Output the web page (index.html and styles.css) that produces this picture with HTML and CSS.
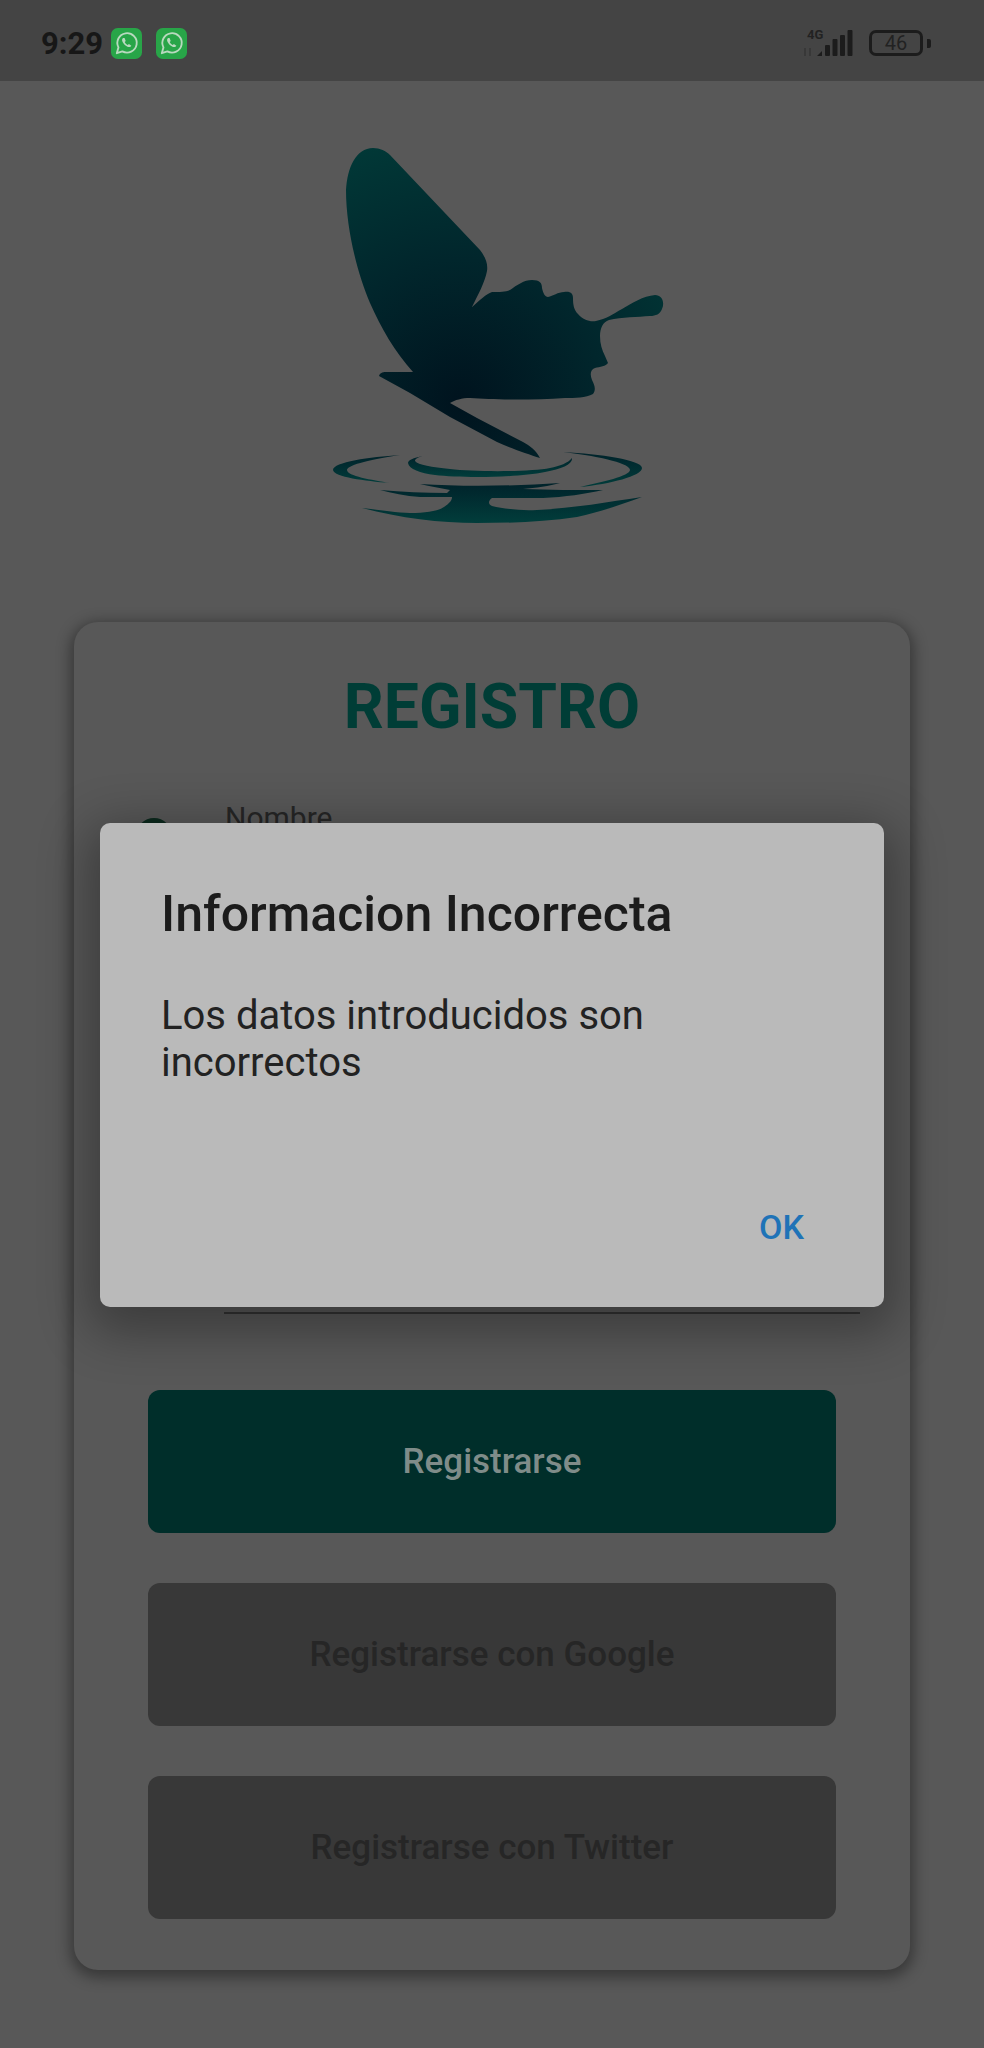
FILE: index.html
```html
<!DOCTYPE html>
<html lang="es">
<head>
<meta charset="utf-8">
<title>Registro</title>
<link rel="stylesheet" href="styles.css">
</head>
<body>
<div class="screen">
  <header class="status">
    <div class="status-left">
      <span class="time">9:29</span>
      <svg class="wa" viewBox="0 0 32 32"><rect width="32" height="32" rx="7" fill="#28a548"/><path d="M6 26l1.700-6a10 10 0 1 1 4 4.100z" fill="none" stroke="#b9d9bf" stroke-width="1.900" stroke-linejoin="round"/><path d="M12.500 10.300c-1.200.8-1.400 2.400-.5 4.200 1.100 2.300 3.100 4.200 5.500 5 1.600.5 3 0 3.500-1.300l-2.500-1.700-1.200 1.100c-1.300-.5-2.600-1.800-3.100-3.100l1-1.200-1.200-3z" fill="#b9d9bf"/></svg>
      <svg class="wa wa-second" viewBox="0 0 32 32"><rect width="32" height="32" rx="7" fill="#28a548"/><path d="M6 26l1.700-6a10 10 0 1 1 4 4.100z" fill="none" stroke="#b9d9bf" stroke-width="1.900" stroke-linejoin="round"/><path d="M12.500 10.300c-1.200.8-1.400 2.400-.5 4.200 1.100 2.300 3.100 4.200 5.500 5 1.600.5 3 0 3.500-1.300l-2.500-1.700-1.200 1.100c-1.300-.5-2.600-1.800-3.100-3.100l1-1.200-1.200-3z" fill="#b9d9bf"/></svg>
    </div>
    <div class="status-right">
      <div class="signal">
        <span class="net">4G</span>
        <svg class="bars" viewBox="0 0 50 27"><g fill="#1c1c1c"><path d="M14 26l5-5v5z"/><rect x="22" y="15" width="5" height="11" rx="1"/><rect x="29.500" y="9" width="5" height="17" rx="1"/><rect x="37" y="5" width="5" height="21" rx="1"/><rect x="44.500" y="0" width="5" height="26" rx="1"/></g><g fill="#383838"><rect x="1" y="18" width="2" height="8"/><rect x="6" y="18" width="2" height="8"/></g></svg>
      </div>
      <div class="battery"><span class="level">46</span></div>
      <span class="cap"></span>
    </div>
  </header>

  <div class="logo-wrap">
    <svg class="logo" viewBox="0 0 370 410">
      <defs>
        <radialGradient id="wing" gradientUnits="userSpaceOnUse" cx="150" cy="272" r="285">
          <stop offset="0" stop-color="#00131e"/>
          <stop offset="0.5" stop-color="#01262c"/>
          <stop offset="1" stop-color="#013a38"/>
        </radialGradient>
        <linearGradient id="water" x1="0" y1="0" x2="0" y2="1">
          <stop offset="0" stop-color="#00222a"/>
          <stop offset="1" stop-color="#013d3b"/>
        </linearGradient>
      </defs>
      <path fill="url(#wing)" d="M36 60C37 38 46 18 63 18C70 18 76 21 80 25L170 120C176 128 178 134 177 141C175 152 168 165 162 177C170 170 176 164 182 162C190 162 195 162 200 160C207 155 214 150 222 150C230 150 232 153 232 158C233 163 235 167 238 167C243 166 248 162 254 162C261 161 263 164 263 168C263 175 264 180 268 184C273 190 280 192 286 191C296 189 303 184 312 179C322 173 333 166 345 165C352 165 355 172 352 179C350 184 346 186 340 186C328 187 312 187 299 190C293 192 290 198 290 206C290 214 292 220 295 226L298 233C296 236 290 237 285 238C280 240 280 245 282 250C285 256 286 260 283 264C276 268 265 268 255 268C225 270 185 270 160 268C152 268 145 270 140 273L167 288L213 312C220 316 226 320 230 328C218 324 200 318 187 312L140 287L100 263L69 246C70 243 72 242 76 242L103 242C85 222 71 198 60 173C48 145 36 100 36 60Z"/>
      <g fill="url(#water)">
        <path d="M90 325C60 327 23 332 23 340C24 347 55 351 80 353C62 350 37 346 37 340C37 336 55 330 90 325Z"/>
        <path d="M253 322C290 324 332 330 332 338C332 346 300 354 270 357C292 352 320 346 320 340C320 334 295 327 253 322Z"/>
        <path d="M113 326C103 328 98 330 98 333C99 339 110 343 125 345C150 348 205 348 235 342C252 339 263 334 262 328C258 333 250 336 240 338C220 342 165 342 140 339C122 337 108 335 105 331C105 329 108 327 113 326Z"/>
        <path d="M110 354C155 357 205 356 250 353C240 356 225 358 213 359C240 360 265 360 293 360C275 364 255 367 233 368H182C178 371 178 374 182 376C195 379 212 381 227 380C265 378 298 372 332 367C310 375 290 382 267 387C235 392 200 393 167 393C130 393 90 388 52 378C72 380 88 383 100 383C116 383 128 381 134 377C140 373 142 370 142 367C130 367 120 367 110 367C95 366 82 363 70 360C92 362 115 363 137 363L140 360C130 358 118 356 110 354Z"/>
      </g>
    </svg>
  </div>

  <section class="card">
    <h1 class="title">REGISTRO</h1>
    <div class="field">
      <span class="field-icon"></span>
      <span class="field-label">Nombre</span>
    </div>
    <div class="last-line"></div>
    <div class="actions">
      <button class="btn btn-primary">Registrarse</button>
      <button class="btn btn-plain">Registrarse con Google</button>
      <button class="btn btn-plain">Registrarse con Twitter</button>
    </div>
  </section>

  <div class="dialog">
    <h2 class="dialog-title">Informacion Incorrecta</h2>
    <p class="dialog-body">Los datos introducidos son incorrectos</p>
    <div class="dialog-actions"><span class="ok">OK</span></div>
  </div>
</div>
</body>
</html>
```
FILE: styles.css
```css
* { box-sizing: border-box; }
html, body { margin: 0; padding: 0; }
body { background: #585858; font-family: Roboto, "Noto Sans", sans-serif; }
.screen { position: relative; width: 984px; height: 2048px; overflow: hidden; background: #585858; }

.status { height: 81px; background: #444444; display: flex; justify-content: space-between; align-items: center; padding: 5px 53px 0 41px; }
.status-left { display: flex; align-items: center; }
.time { font-size: 31px; font-weight: 700; color: #171717; width: 70px; }
.wa { width: 31px; height: 31px; display: block; }
.wa-second { margin-left: 14px; }
.status-right { display: flex; align-items: center; }
.signal { position: relative; width: 50px; height: 27px; margin-right: 16px; }
.net { position: absolute; left: 4px; top: -1px; font-size: 13px; font-weight: 700; color: #222; line-height: 12px; }
.bars { display: block; width: 50px; height: 27px; }
.battery { width: 54px; height: 26px; border: 3px solid #1c1c1c; border-radius: 7px; display: flex; align-items: center; justify-content: center; }
.level { font-size: 20px; color: #222; line-height: 1; }
.cap { width: 4px; height: 9px; margin-left: 4px; background: #1c1c1c; border-radius: 0 2px 2px 0; }

.logo-wrap { display: flex; justify-content: center; padding: 0 0 0 6px; height: 541px; }
.logo { display: block; width: 370px; height: 410px; margin-top: 49px; }

.card { width: 836px; height: 1348px; margin-left: 74px; background: #585858; border-radius: 24px; box-shadow: 0 4px 14px 4px rgba(0,0,0,.36); padding: 0 74px 51px; display: flex; flex-direction: column; }
.title { margin: 48px 0 0; font-size: 62.500px; font-weight: 700; line-height: 74px; color: #003d36; text-align: center; }
.field { display: flex; align-items: flex-start; height: 60px; margin: 56px 0 0 -74px; padding-left: 62px; }
.field-icon { width: 36px; height: 36px; margin-top: 18px; flex: none; border-radius: 50%; background: #0c2a1e; }
.field-label { margin-left: 53px; font-size: 30px; line-height: 35px; color: #262626; }
.last-line { flex: none; height: 2px; margin: 452px -24px 0 76px; background: #333; }
.actions { margin-top: auto; display: flex; flex-direction: column; gap: 50px; }
.btn { display: block; width: 100%; height: 143px; border: 0; border-radius: 12px; font-family: inherit; font-size: 35px; font-weight: 500; }
.btn-primary { background: #002e2a; color: #7f8c89; }
.btn-plain { background: #383838; color: #262626; }

.dialog { position: absolute; left: 100px; top: 823px; width: 784px; height: 484px; background: #bababa; border-radius: 10px; box-shadow: 0 14px 50px 12px rgba(0,0,0,.32); padding: 64px 61px 0; display: flex; flex-direction: column; }
.dialog-title { margin: 0; font-size: 50px; font-weight: 500; line-height: 54px; color: #1c1c1c; }
.dialog-body { margin: 51px 0 0; width: 560px; font-size: 40px; line-height: 47px; color: #222; }
.dialog-actions { margin-top: auto; display: flex; justify-content: flex-end; padding: 0 19px 60px 0; }
.ok { font-size: 34px; font-weight: 500; line-height: 40px; color: #1f73b7; }
```
